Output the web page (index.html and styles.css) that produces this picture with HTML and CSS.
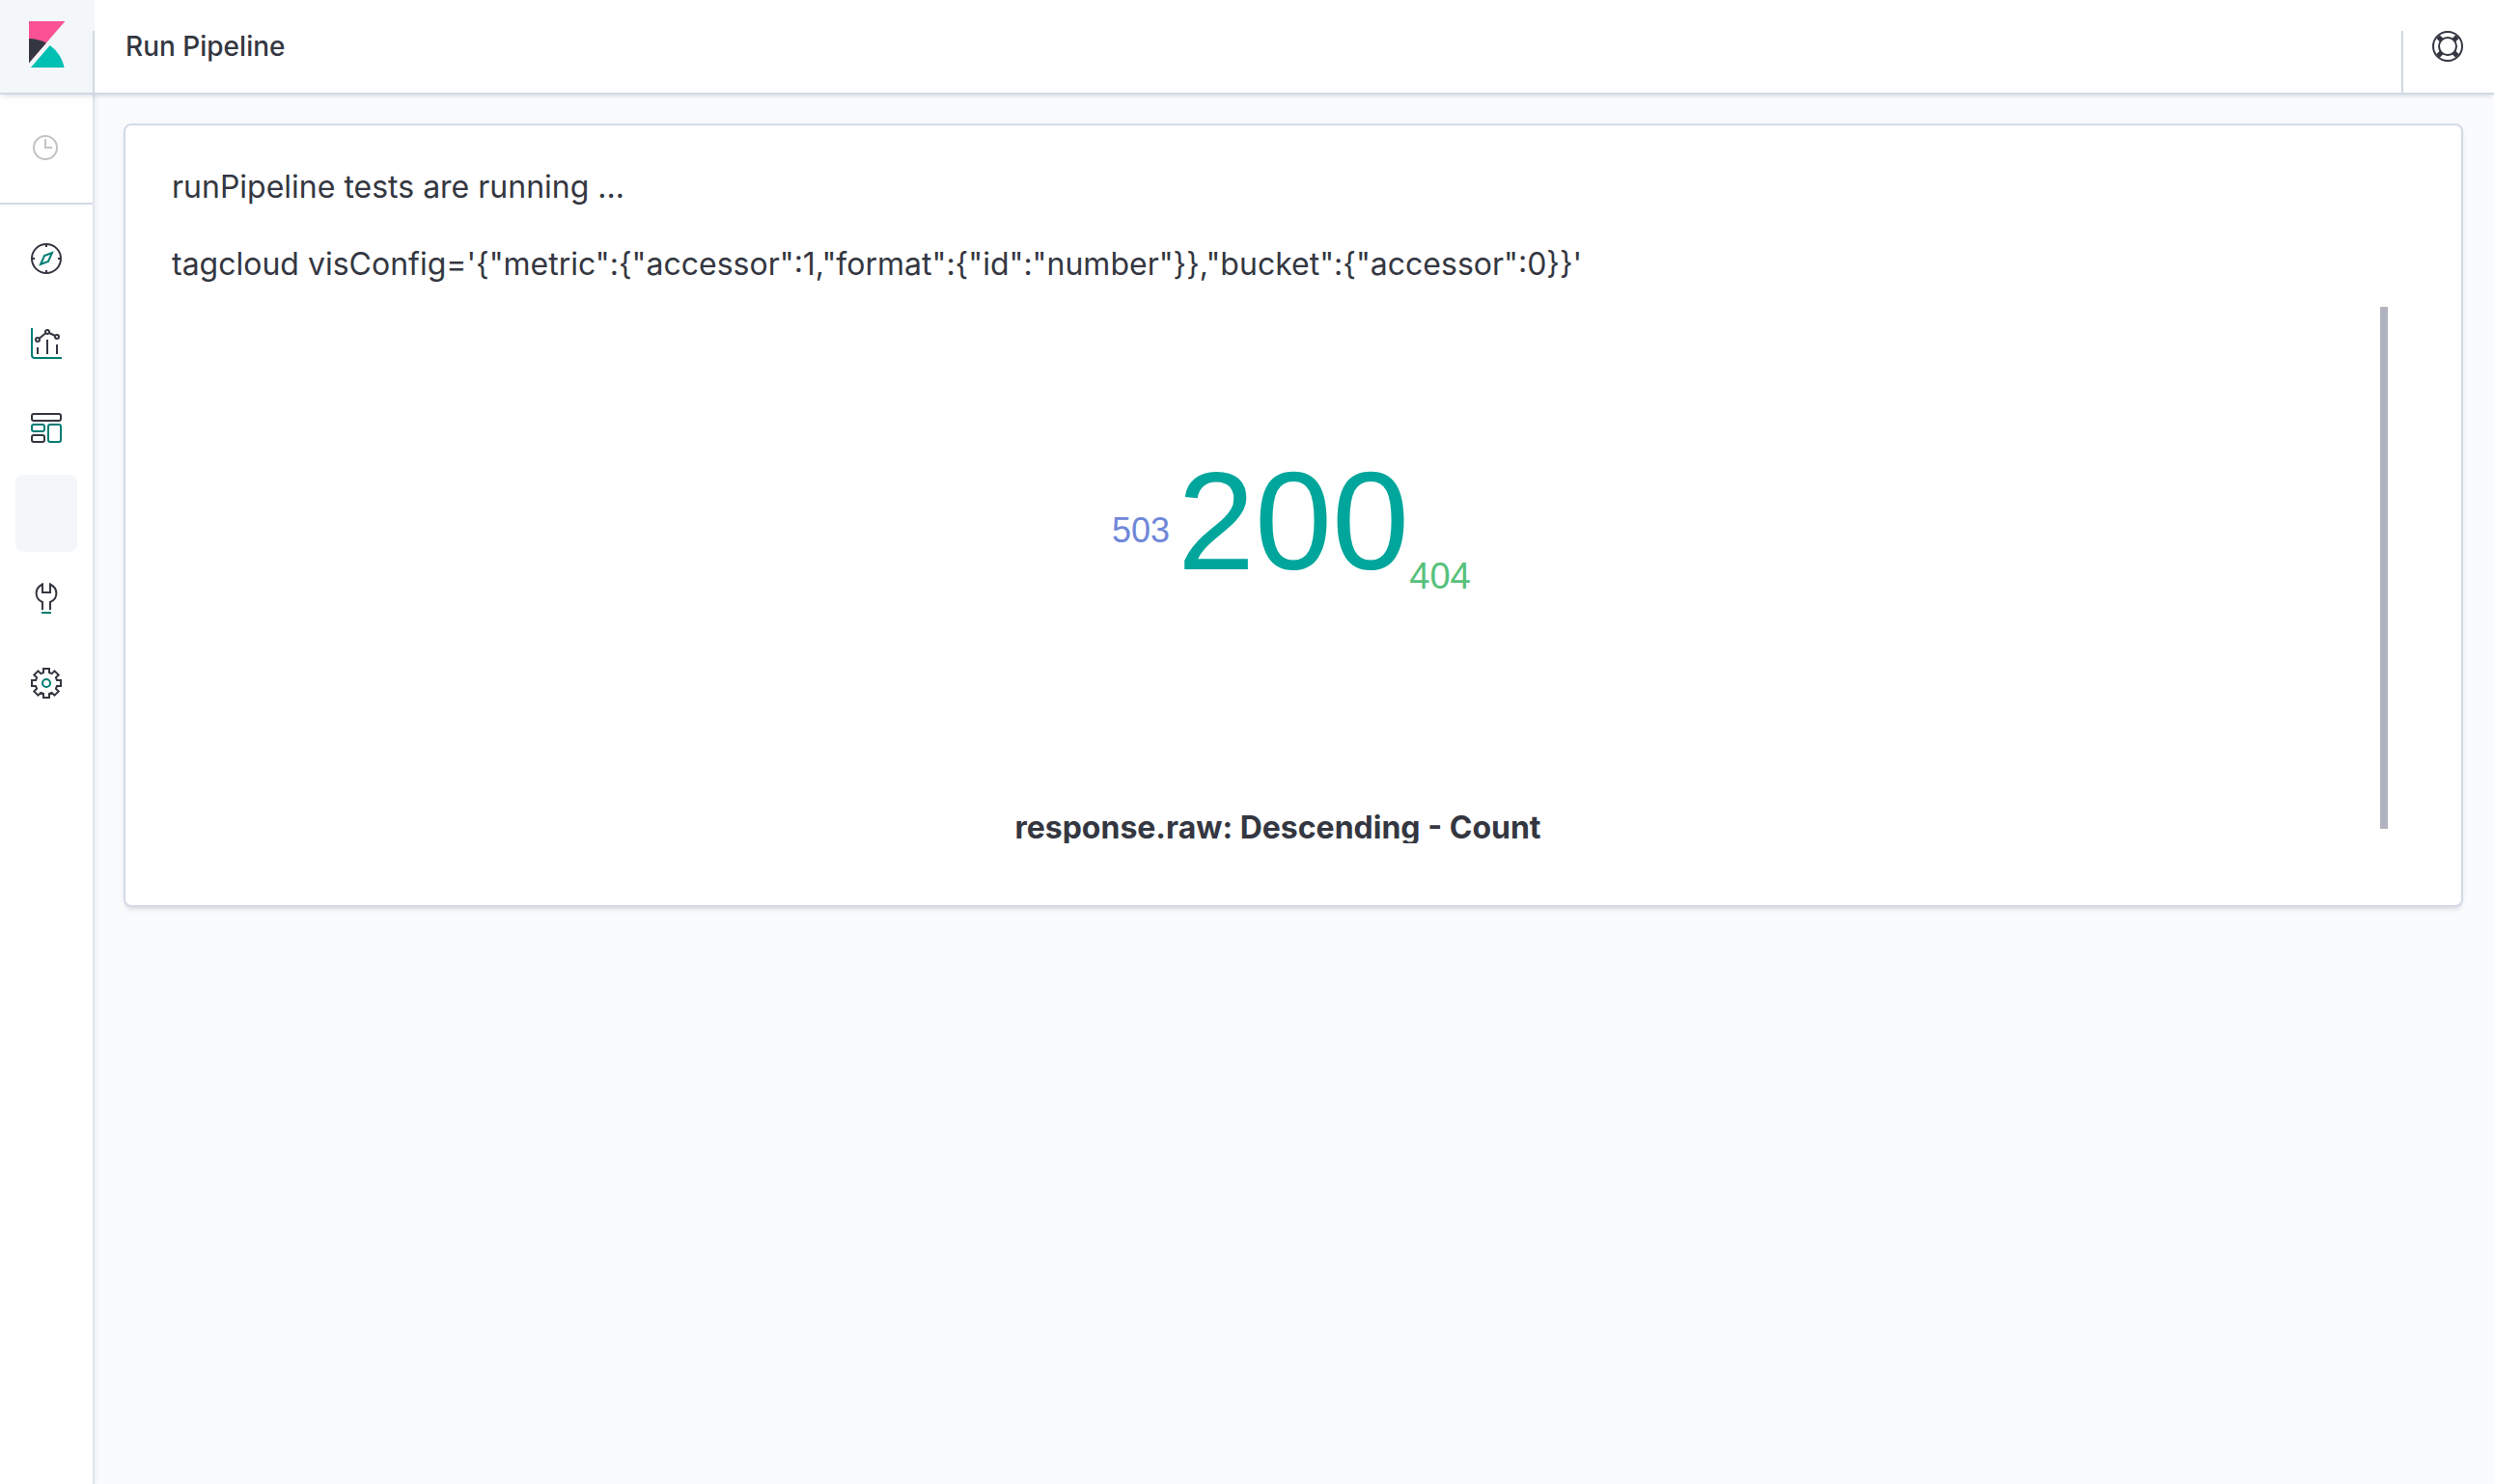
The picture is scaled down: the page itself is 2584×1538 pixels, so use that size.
FILE: index.html
```html
<!DOCTYPE html>
<html lang="en">
<head>
<meta charset="utf-8">
<title>Run Pipeline</title>
<link rel="stylesheet" href="styles.css">
</head>
<body>
<div class="app">
  <header class="header">
    <a class="logo" href="#" aria-label="Home">
      <svg width="48" height="48" viewBox="0 0 32 32"><path d="M4 0v28.789L28.935.017z" class="logo-pink"/><path fill="#343741" d="M4 12v16.789l11.906-13.738A24.721 24.721 0 0 0 4 12"/><path fill="#00BFB3" d="M18.479 16.664L6.268 30.754l-1.073 1.237h23.191c-1.252-6.292-4.883-11.719-9.908-15.327"/></svg>
    </a>
    <h1 class="title">Run Pipeline</h1>
    <button class="help" type="button" aria-label="Help">
      <svg class="icon" viewBox="0 0 32 32"><circle cx="16" cy="16" r="15"/><circle cx="16" cy="16" r="9"/><path stroke-width="5" d="M6 6l4 4M26 6l-4 4M6 26l4-4M26 26l-4-4"/></svg>
    </button>
  </header>
  <div class="body">
    <nav class="sidebar" aria-label="Main">
      <div class="recent">
        <button class="recent-button" type="button" aria-label="Recently viewed" disabled>
          <svg class="icon-small" viewBox="0 0 26 26"><circle cx="13" cy="13" r="12"/><path d="M13 4v9h7"/></svg>
        </button>
      </div>
      <div class="links">
        <a class="link" href="#" aria-label="Discover">
          <svg class="icon" viewBox="0 0 32 32"><circle cx="16" cy="16" r="15"/><path d="M16 1v3M16 28v3M1 16h3M28 16h3"/><path class="accent" d="M22 10l-8 3-4 9 8-3z"/></svg>
        </a>
        <a class="link" href="#" aria-label="Visualize">
          <svg class="icon" viewBox="0 0 32 32"><path class="accent" d="M1 0v28a3 3 0 0 0 3 3h28"/><path d="M7 20v7M17 12v15M27 17v10M9 10.500l6-5M19 5l6 3"/><circle cx="7" cy="12" r="2"/><circle cx="17" cy="4" r="2"/><circle cx="27" cy="9" r="2"/></svg>
        </a>
        <a class="link" href="#" aria-label="Dashboard">
          <svg class="icon" viewBox="0 0 32 32"><rect x="1" y="1" width="30" height="7" rx="2"/><rect x="1" y="23" width="13" height="7" rx="2"/><rect class="accent" x="1" y="12" width="13" height="7" rx="2"/><rect class="accent" x="18" y="12" width="13" height="18" rx="2"/></svg>
        </a>
        <a class="link link-active" href="#" aria-label="Run Pipeline" aria-current="page"></a>
        <a class="link" href="#" aria-label="Dev Tools">
          <svg class="icon" viewBox="0 0 32 32"><path d="M12 28v-8C4 17 3 6 12 1.500V10h8V1.500C29 6 28 17 20 20v8"/><path class="accent" d="M11 31h10"/></svg>
        </a>
        <a class="link" href="#" aria-label="Management">
          <svg class="icon" viewBox="0 0 32 32"><path d="M13 1h6v4l2.700 1.100 2.800-2.800 4.200 4.200-2.800 2.800L27 13h4v6h-4l-1.100 2.700 2.800 2.800-4.200 4.200-2.800-2.800L19 27v4h-6v-4l-2.700-1.100-2.800 2.800-4.200-4.200 2.800-2.800L5 19H1v-6h4l1.100-2.700-2.800-2.800 4.200-4.200 2.800 2.800L13 5z"/><circle class="accent" cx="16" cy="16" r="4"/></svg>
        </a>
      </div>
    </nav>
    <main class="content">
      <section class="panel">
        <p class="line">runPipeline tests are running ...</p>
        <p class="line">tagcloud visConfig='{"metric":{"accessor":1,"format":{"id":"number"}},"bucket":{"accessor":0}}'</p>
        <div class="vis">
          <div class="cloud">
            <svg class="tags" viewBox="-300 -258 600 516">
              <text class="tag tag-200" x="16" y="14">200</text>
              <text class="tag tag-503" x="-142" y="-14">503</text>
              <text class="tag tag-404" x="168" y="34">404</text>
            </svg>
            <div class="caption">response.raw: Descending - Count</div>
          </div>
          <div class="thumb"></div>
        </div>
      </section>
    </main>
  </div>
</div>
</body>
</html>
```
FILE: styles.css
```css
* {
  box-sizing: border-box;
}

body {
  margin: 0;
  background: #fafbfd;
  color: #343741;
  font-family: Inter, "Liberation Sans", sans-serif;
  font-size: 32px;
  line-height: 48px;
}

button {
  border: 0;
  padding: 0;
  background: none;
}

svg {
  display: block;
}

.app {
  display: flex;
  flex-direction: column;
  min-height: 100vh;
}

.header {
  display: flex;
  height: 98px;
  border-bottom: 2px solid #d0d9e5;
  background: #fff;
  box-shadow: 0 4px 4px -2px rgba(152, 162, 179, 0.3);
  z-index: 1;
}

.logo {
  display: flex;
  align-items: center;
  justify-content: center;
  width: 98px;
  padding: 0 2px 4px 0;
  background: linear-gradient(#d0d9e5, #d0d9e5) right bottom / 2px 64px no-repeat #f3f7fa;
}

.logo-pink {
  fill: #fa5295;
}

.title {
  flex: 1;
  margin: 0;
  padding-left: 32px;
  font-size: 28px;
  font-weight: 500;
  line-height: 96px;
}

.help {
  width: 96px;
  padding: 0 32px;
  background: linear-gradient(#d0d9e5, #d0d9e5) left bottom / 2px 64px no-repeat;
}

.body {
  display: flex;
  flex: 1;
}

.sidebar {
  width: 98px;
  border-right: 2px solid #dfe4ee;
  background: #fff;
  box-shadow: 2px 0 4px rgba(152, 162, 179, 0.12);
}

.recent {
  padding: 16px;
  border-bottom: 2px solid #d0d9e5;
}

.recent-button {
  display: flex;
  align-items: center;
  justify-content: center;
  width: 62px;
  height: 80px;
  padding-bottom: 2px;
}

.links {
  display: grid;
  gap: 8px;
  padding: 16px;
}

.link {
  display: flex;
  align-items: center;
  justify-content: center;
  height: 80px;
  border-radius: 8px;
}

.link-active {
  background: #f3f7fa;
}

.icon,
.icon-small {
  width: 32px;
  height: 32px;
  fill: none;
  stroke: #343741;
  stroke-width: 2px;
}

.icon [stroke-width="5"] {
  stroke-width: 5px;
}

.icon-small {
  width: 26px;
  height: 26px;
  stroke: #c2c3c6;
}

.accent {
  stroke: #017d73;
}

.content {
  flex: 1;
  min-width: 0;
  padding: 30px 32px 32px 30px;
}

.panel {
  padding: 40px 48px 64px;
  border: 2px solid #d3dae6;
  border-radius: 8px;
  background: #fff;
  box-shadow: 0 4px 4px -2px rgba(152, 162, 179, 0.3), 0 2px 10px -4px rgba(152, 162, 179, 0.3);
}

.line {
  margin: 0 0 32px;
}

.vis {
  display: flex;
  align-items: flex-start;
  gap: 12px;
  height: 556px;
  margin-top: -12px;
  padding: 0 28px 0 16px;
  overflow: hidden;
}

.cloud {
  flex: 1;
  text-align: center;
}

.tags {
  width: 600px;
  height: 516px;
  margin: 0 auto;
}

.tag {
  font-family: "Liberation Sans", sans-serif;
  text-anchor: middle;
}

.tag-200 {
  fill: #00a69b;
  font-size: 144px;
}

.tag-503 {
  fill: #6f87d8;
  font-size: 36px;
}

.tag-404 {
  fill: #57c17b;
  font-size: 38px;
}

.caption {
  font-weight: 700;
}

.thumb {
  width: 8px;
  height: 541px;
  background: #b1b4be;
}
```
